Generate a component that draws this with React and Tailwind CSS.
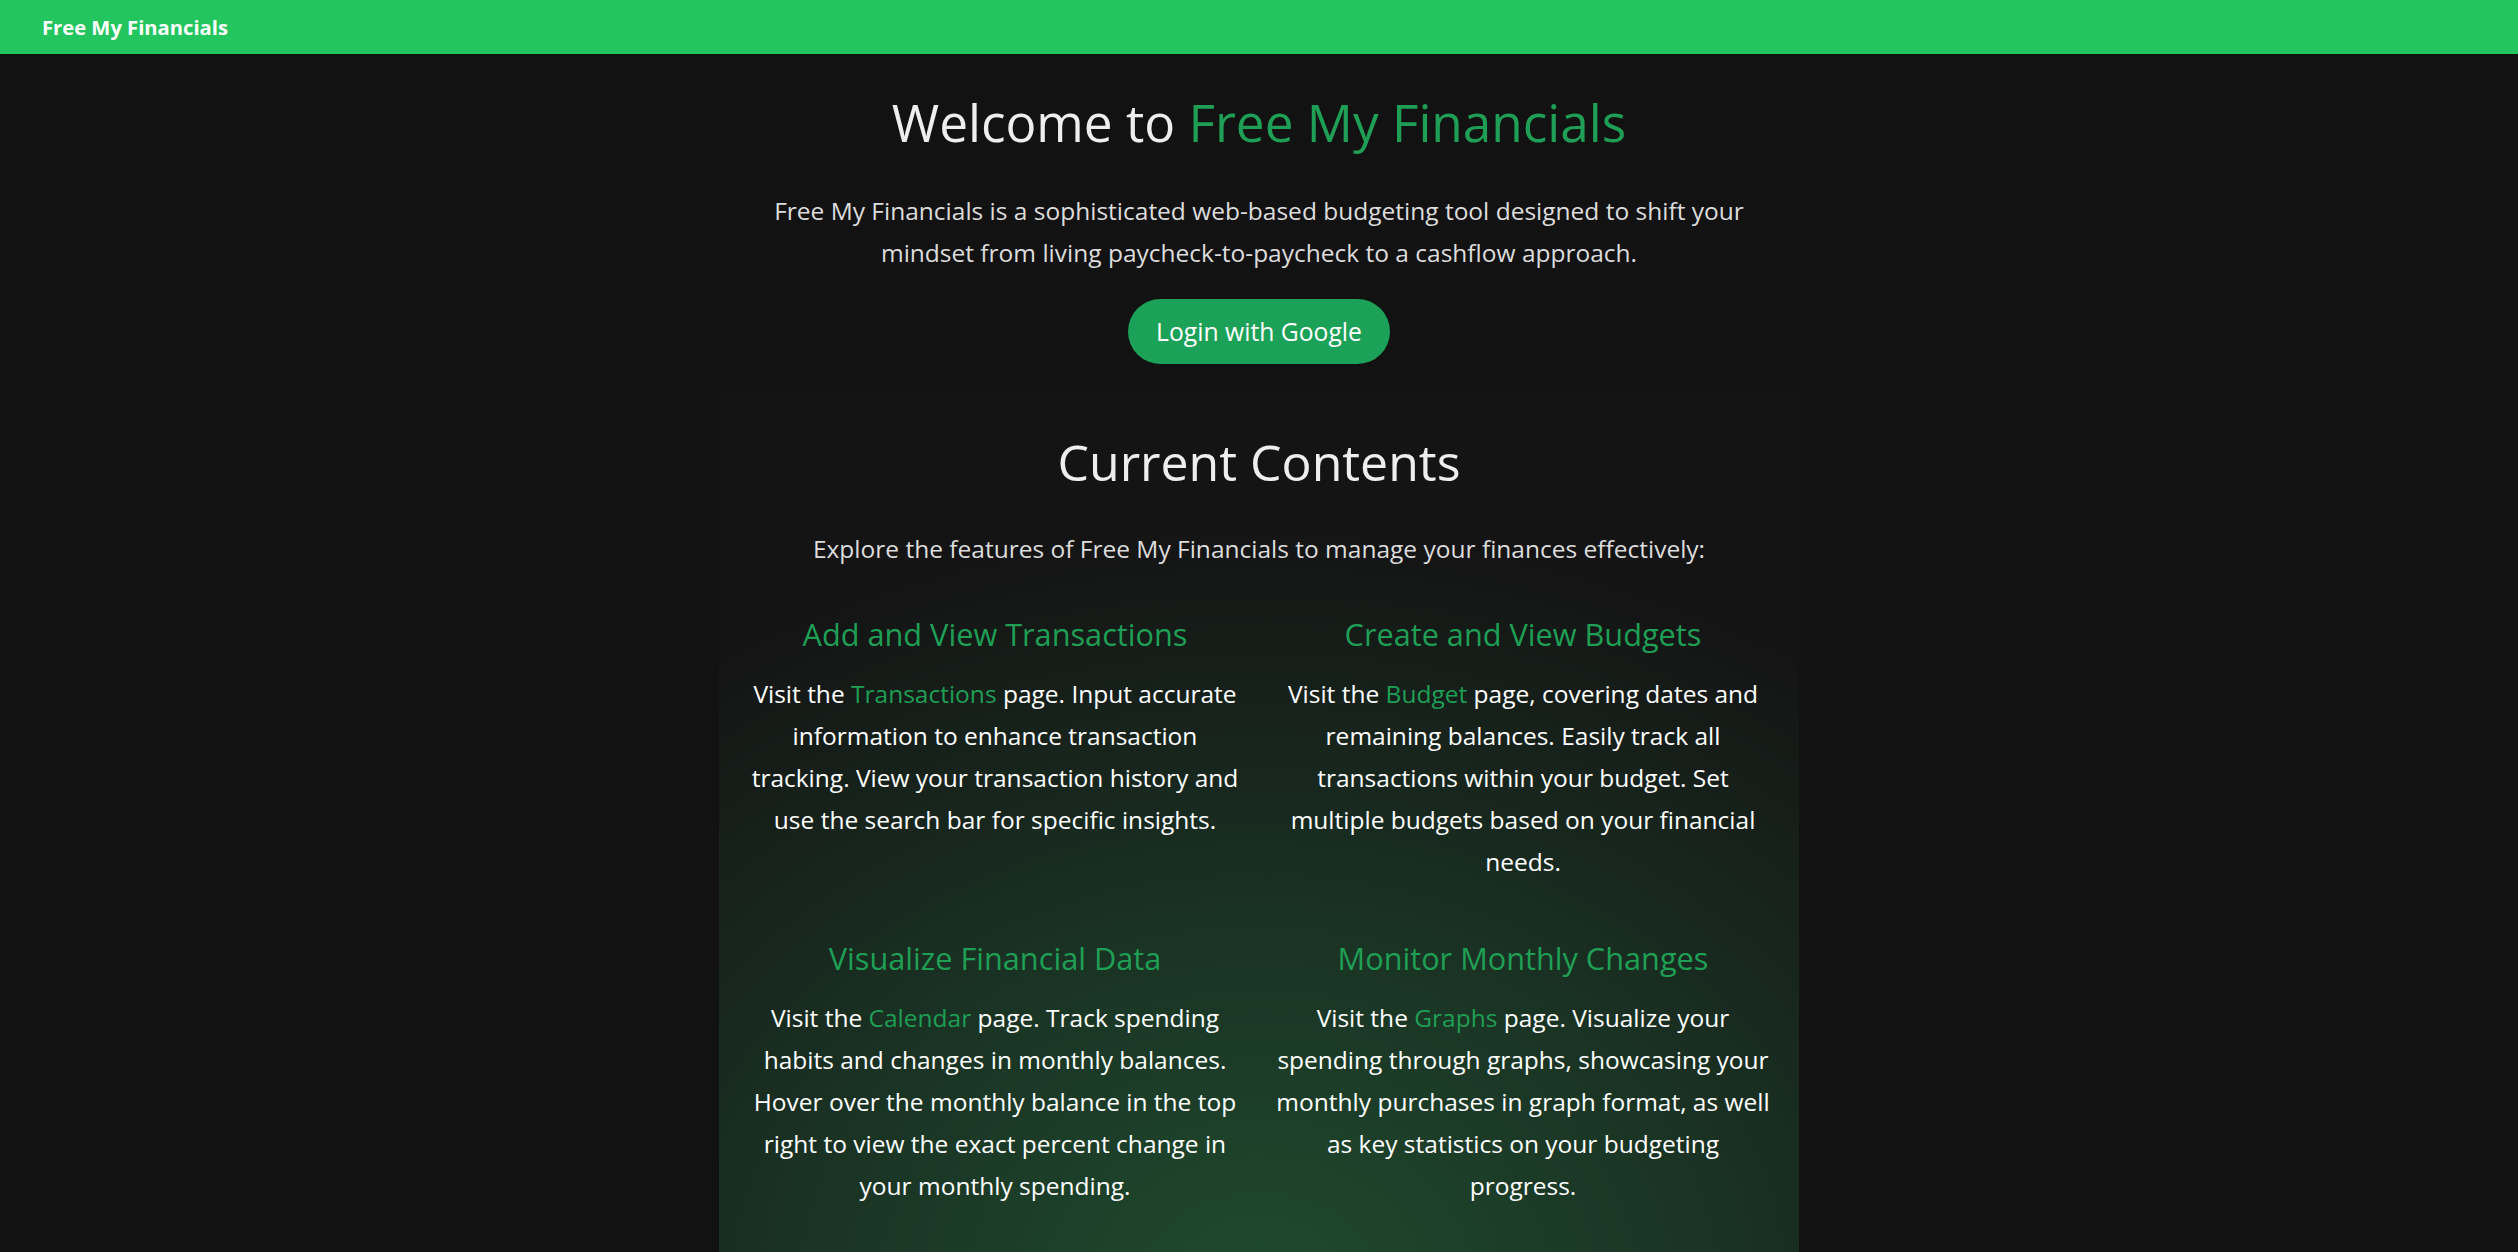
import React from "react";

const features = [
  {
    title: "Add and View Transactions",
    pre: "Visit the ",
    link: "Transactions",
    post: " page. Input accurate information to enhance transaction tracking. View your transaction history and use the search bar for specific insights.",
  },
  {
    title: "Create and View Budgets",
    pre: "Visit the ",
    link: "Budget",
    post: " page, covering dates and remaining balances. Easily track all transactions within your budget. Set multiple budgets based on your financial needs.",
  },
  {
    title: "Visualize Financial Data",
    pre: "Visit the ",
    link: "Calendar",
    post: " page. Track spending habits and changes in monthly balances. Hover over the monthly balance in the top right to view the exact percent change in your monthly spending.",
  },
  {
    title: "Monitor Monthly Changes",
    pre: "Visit the ",
    link: "Graphs",
    post: " page. Visualize your spending through graphs, showcasing your monthly purchases in graph format, as well as key statistics on your budgeting progress.",
  },
];

export default function App() {
  return (
    <div
      className="min-h-screen bg-[#121212] text-white"
      style={{ fontFamily: '"Open Sans", "Noto Sans", sans-serif' }}
    >
      <nav className="flex h-[54px] items-center bg-[#22c55e] pl-[42px]">
        <span className="text-[20.2px] font-bold leading-none text-white">Free My Financials</span>
      </nav>

      <main className="flex flex-col items-center">
        <section className="flex flex-col items-center text-center">
          <h1 className="mt-[38px] text-[51.3px] font-normal leading-[61px] text-[#eeeeee]">
            Welcome to <span className="text-[#1f9f55]">Free My Financials</span>
          </h1>
          <p className="mt-[37px] max-w-[1040px] text-[24.5px] leading-[42px] text-[#dddddd]">
            Free My Financials is a sophisticated web-based budgeting tool designed to shift your mindset from living paycheck-to-paycheck to a cashflow approach.
          </p>
          <button className="mt-[25px] flex h-[65px] items-center rounded-full bg-[#1ba158] px-[28px] text-[24.7px] text-white">
            Login with Google
          </button>
        </section>

        <section className="mt-[29px] w-[1080px] bg-[radial-gradient(ellipse_90%_85%_at_50%_100%,#1f4b2e_0%,#1a3424_45%,#141414_100%)] px-6 pb-[80px] pt-[39px] text-center">
          <h2 className="text-[50px] font-normal leading-[60px] text-[#eeeeee]">Current Contents</h2>
          <p className="mt-[36px] text-[24.5px] leading-[42px] text-[#dddddd]">
            Explore the features of Free My Financials to manage your finances effectively:
          </p>
          <div className="mt-[46px] grid grid-cols-2 gap-x-6 gap-y-[57px]">
            {features.map((f) => (
              <div key={f.title} className="flex flex-col items-center">
                <h3 className="text-[30.7px] font-normal leading-[37px] text-[#1f9f55]">{f.title}</h3>
                <p className="mt-[20px] text-[24.5px] leading-[42px] text-white">
                  {f.pre}
                  <span className="text-[#1f9f55]">{f.link}</span>
                  {f.post}
                </p>
              </div>
            ))}
          </div>
        </section>
      </main>
    </div>
  );
}
